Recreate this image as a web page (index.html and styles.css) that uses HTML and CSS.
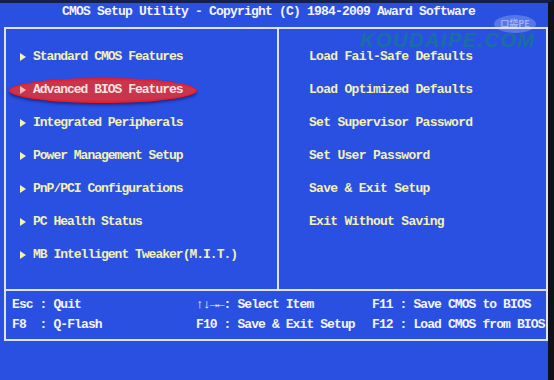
FILE: index.html
```html
<!DOCTYPE html>
<html lang="en">
<head>
    <meta charset="UTF-8">
    <title>CMOS Setup Utility</title>
    <link rel="stylesheet" href="styles.css">
</head>
<body>
    <div class="screen">
        <div class="title">CMOS Setup Utility - Copyright (C) 1984-2009 Award Software</div>

        <div class="frame">
            <div class="menu">
                <ul class="col left">
                    <li><span class="arrow"></span>Standard CMOS Features</li>
                    <li class="selected"><span class="arrow"></span>Advanced BIOS Features</li>
                    <li><span class="arrow"></span>Integrated Peripherals</li>
                    <li><span class="arrow"></span>Power Management Setup</li>
                    <li><span class="arrow"></span>PnP/PCI Configurations</li>
                    <li><span class="arrow"></span>PC Health Status</li>
                    <li><span class="arrow"></span>MB Intelligent Tweaker(M.I.T.)</li>
                </ul>
                <ul class="col right">
                    <li>Load Fail-Safe Defaults</li>
                    <li>Load Optimized Defaults</li>
                    <li>Set Supervisor Password</li>
                    <li>Set User Password</li>
                    <li>Save &amp; Exit Setup</li>
                    <li>Exit Without Saving</li>
                </ul>
            </div>
            <div class="keys">
                <div class="key-col k1">
                    <div>Esc : Quit</div>
                    <div>F8  : Q-Flash</div>
                </div>
                <div class="key-col k2">
                    <div>↑↓→←: Select Item</div>
                    <div>F10 : Save &amp; Exit Setup</div>
                </div>
                <div class="key-col k3">
                    <div>F11 : Save CMOS to BIOS</div>
                    <div>F12 : Load CMOS from BIOS</div>
                </div>
            </div>
        </div>

        <!-- watermark over the photo -->
        <div class="badge">口袋PE</div>
        <div class="watermark">KOUDAIPE.COM</div>
    </div>
</body>
</html>
```

FILE: styles.css
```css
body {
    margin: 0;
    background-color: #101018;
    font-family: "Liberation Mono", "DejaVu Sans Mono", monospace;
    font-weight: bold;
}

.screen {
    position: relative;
    width: 554px;
    height: 380px;
    background-color: #2a50e2;
    overflow: hidden;
    box-sizing: border-box;
    border-top: 3px solid #15204a;
    border-right: 6px solid #101018;
}

.title {
    height: 24px;
    line-height: 18px;
    padding-left: 62px;
    color: #f4f4ff;
    font-size: 13px;
    letter-spacing: -0.8px;
    white-space: pre;
}

.frame {
    margin-left: 4px;
    width: 544px;
    border: 2px solid #dfe3f6;
    box-sizing: border-box;
}

.menu {
    display: grid;
    grid-template-columns: 273px 1fr;
    height: 260px;
}

.col {
    list-style: none;
    margin: 0;
    padding: 11px 0 0 0;
}

.col li {
    display: flex;
    align-items: center;
    height: 33px;
    color: #f3f1b6;
    font-size: 13px;
    white-space: pre;
}

.left {
    border-right: 2px solid #dfe3f6;
}

.left li {
    padding-left: 14px;
    letter-spacing: -1px;
}

.right li {
    padding-left: 30px;
    letter-spacing: -0.7px;
}

.arrow {
    width: 0;
    height: 0;
    border-top: 4px solid transparent;
    border-bottom: 4px solid transparent;
    border-left: 6px solid #f3f1b6;
    margin-right: 7px;
}

.col li.selected {
    position: relative;
    z-index: 0;
    color: #fbe2e2;
}

.selected .arrow {
    border-left-color: #f3b8b8;
}

.selected::before {
    content: "";
    position: absolute;
    left: 3px;
    top: 5px;
    width: 184px;
    height: 21px;
    border: 2px solid #ee1c26;
    border-radius: 50%;
    background-color: #c8354c;
    box-shadow: 0 2px 3px rgba(10, 20, 90, 0.6);
    z-index: -1;
}

.keys {
    display: flex;
    align-items: center;
    height: 48px;
    border-top: 2px solid #dfe3f6;
    color: #f4f4ff;
    font-size: 13px;
    letter-spacing: -0.9px;
}

.key-col div {
    line-height: 20px;
    white-space: pre;
}

.k1 {
    padding-left: 6px;
    width: 184px;
}

.k2 {
    width: 176px;
}

.badge {
    position: absolute;
    left: 494px;
    top: 12px;
    width: 42px;
    height: 18px;
    border-radius: 50%;
    background-color: rgba(220, 230, 255, 0.25);
    color: rgba(230, 240, 255, 0.5);
    font-family: "Noto Sans CJK SC", sans-serif;
    font-size: 9px;
    line-height: 18px;
    text-align: center;
}

.watermark {
    position: absolute;
    left: 360px;
    top: 29px;
    color: rgba(20, 120, 145, 0.8);
    font-family: "Liberation Sans", Arial, sans-serif;
    font-style: italic;
    font-weight: bold;
    font-size: 20px;
    line-height: 16px;
    letter-spacing: 1.5px;
}
```
